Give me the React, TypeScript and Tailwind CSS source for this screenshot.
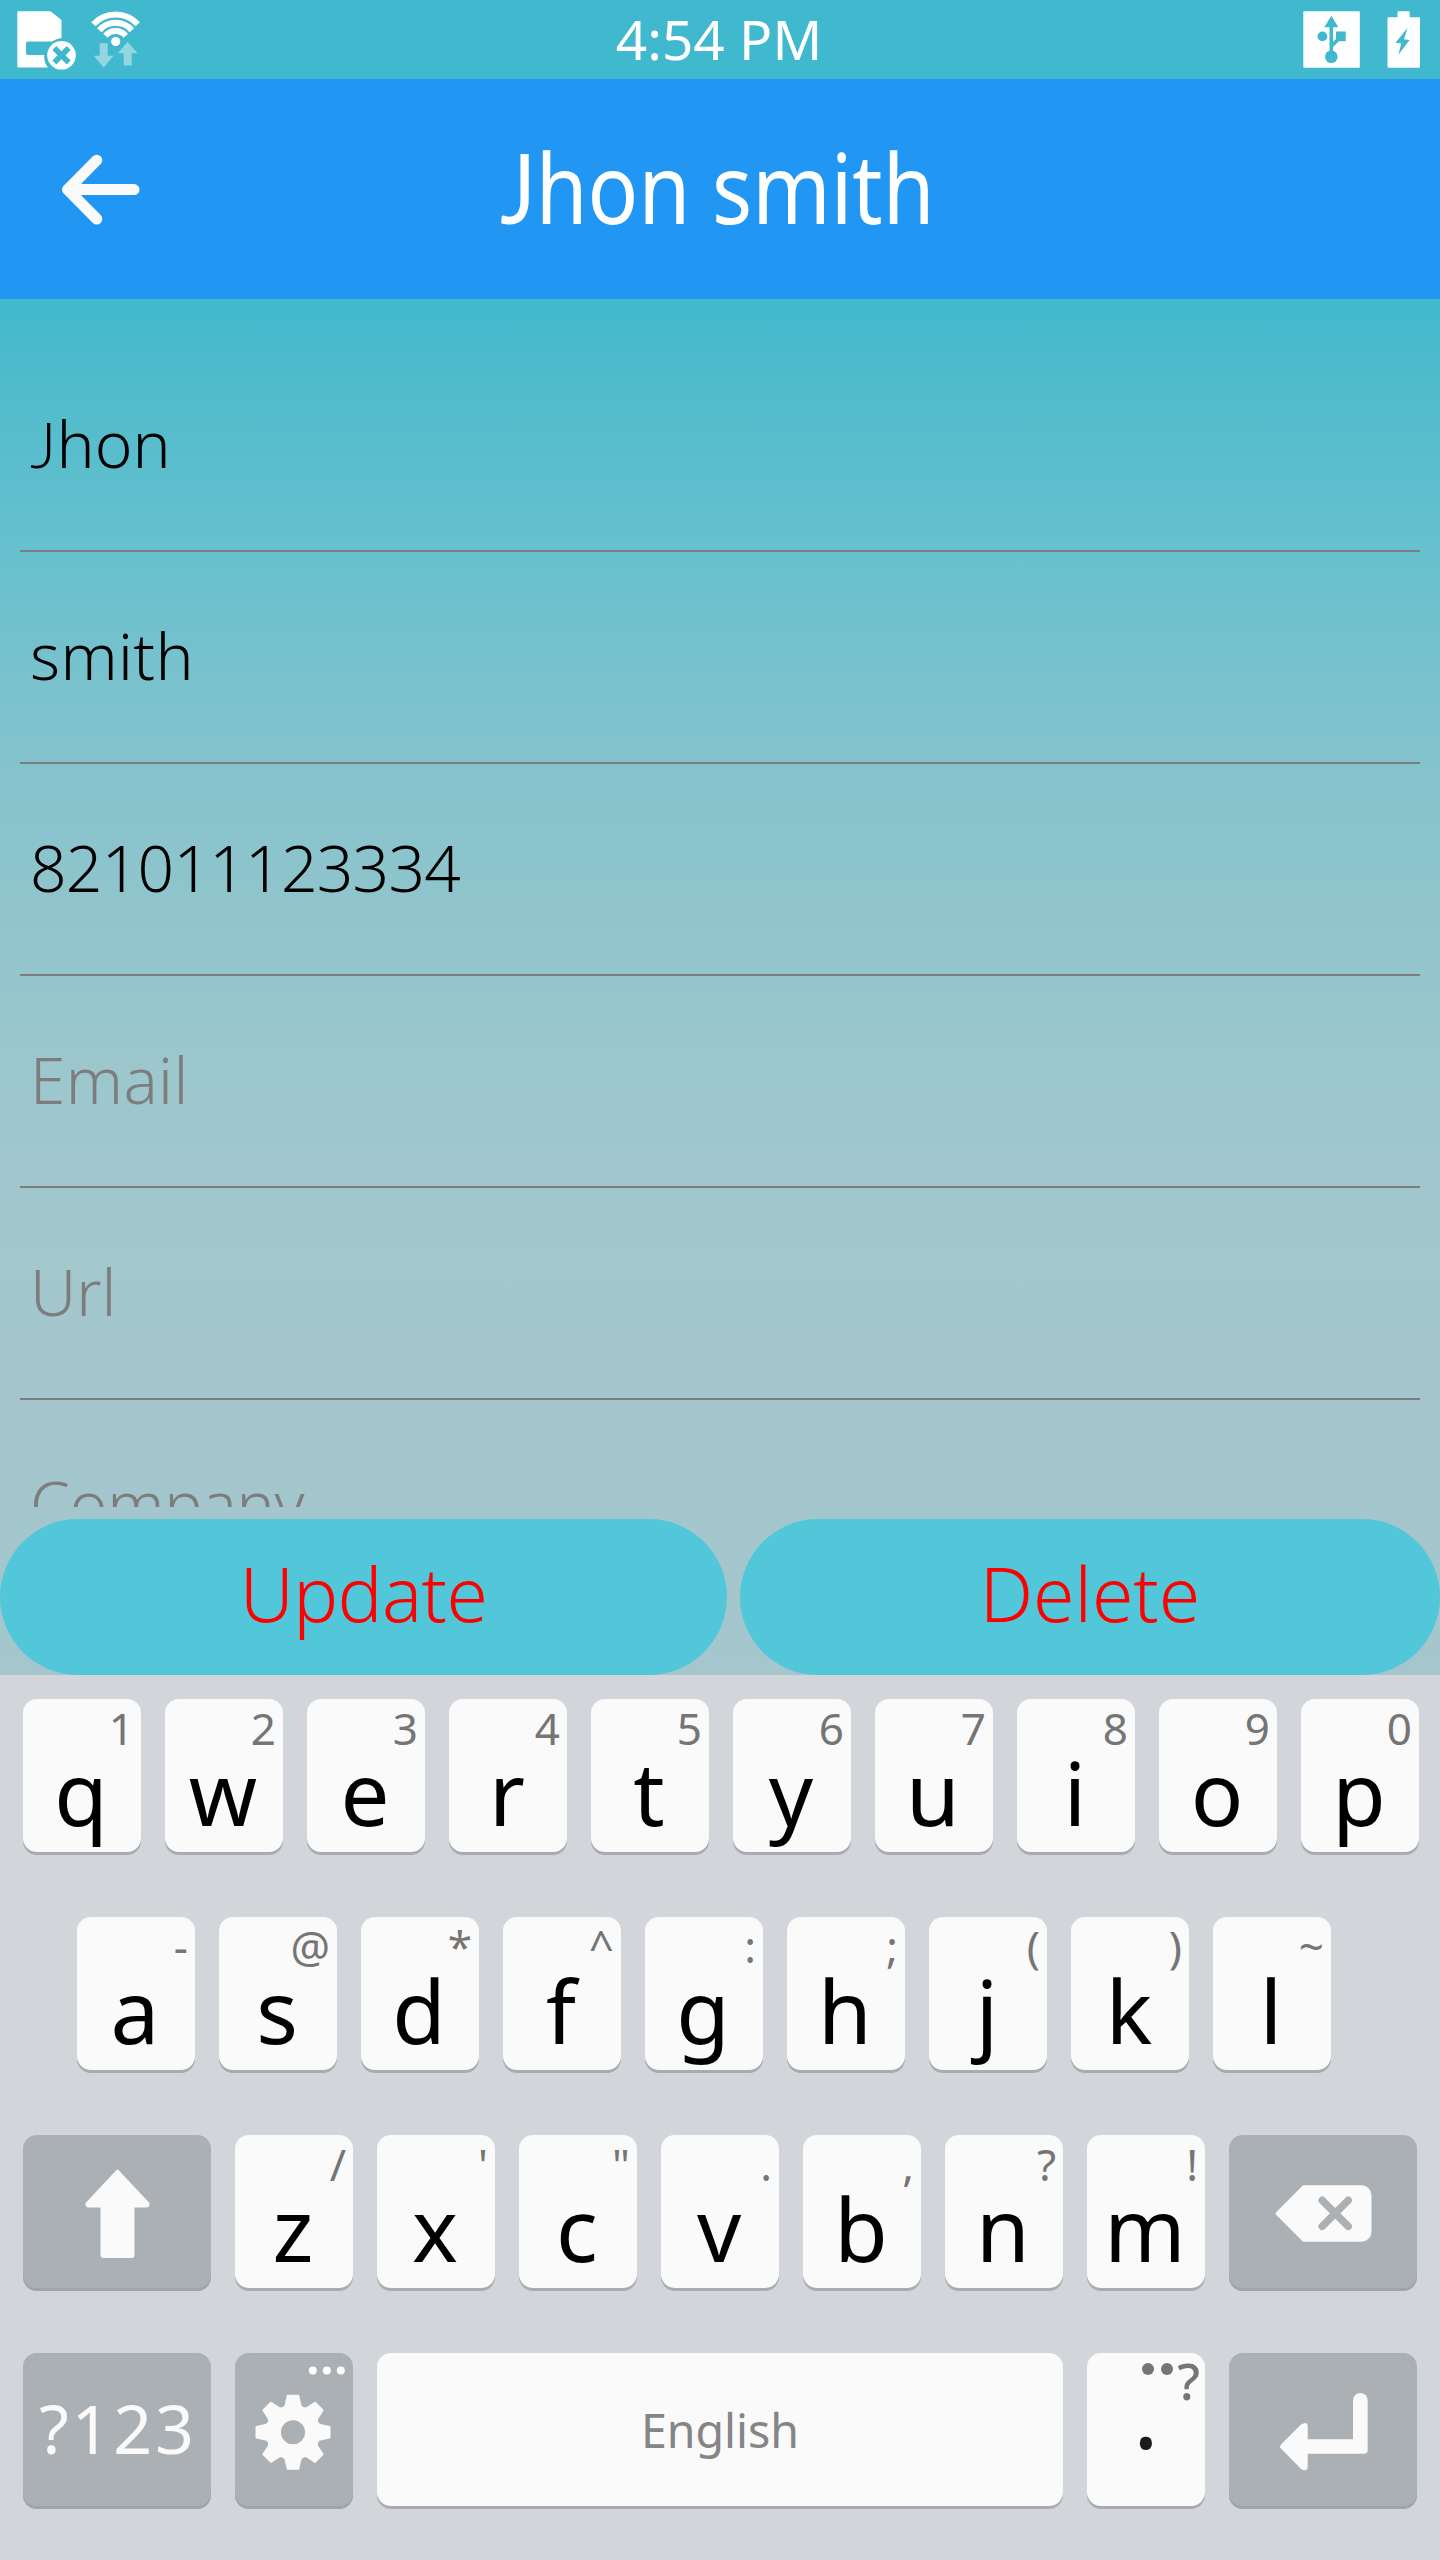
import type { ReactNode } from "react";

type Field = { value?: string; placeholder?: string; tracking: string };

const fields: Field[] = [
  { value: "Jhon", tracking: "tracking-[0px]" },
  { value: "smith", tracking: "tracking-[0.4px]" },
  { value: "821011123334", tracking: "tracking-[-0.7px]" },
  { placeholder: "Email", tracking: "tracking-[0.4px]" },
  { placeholder: "Url", tracking: "tracking-[0px]" },
  { placeholder: "Company", tracking: "tracking-[-0.2px]" },
];

const topRow = ["q1", "w2", "e3", "r4", "t5", "y6", "u7", "i8", "o9", "p0"];
const middleRow = ["a-", "s@", "d*", "f^", "g:", "h;", "j(", "k)", "l~"];
const bottomRow = ["z/", "x'", 'c"', "v.", "b,", "n?", "m!"];

/* The J of this typeface rests on the baseline, unlike the one in Noto Sans. */
function Name({ text }: { text: string }) {
  return text.startsWith("J") ? (
    <>
      <span className="font-['Lato']">J</span>
      {text.slice(1)}
    </>
  ) : (
    <>{text}</>
  );
}

function StatusBar() {
  return (
    <div className="flex h-[79px] items-start justify-between bg-[#40b8ce]">
      <svg className="h-[79px] w-[160px]" viewBox="0 0 160 79">
        <path
          fill="#fff"
          fillRule="evenodd"
          d="M18.3 11.3h32.2l11 8.6v18a17.6 17.6 0 0 0-9.5 3.7H28a2 2 0 0 0-2 2V53a2 2 0 0 0 2 2h16.2a17.6 17.6 0 0 0 3.8 12.6H18.3a1 1 0 0 1-1-1V12.3a1 1 0 0 1 1-1z"
        />
        <circle cx="61.5" cy="55.3" r="14.3" fill="#fff" />
        <path d="M54.3 48.1l14.4 14.4M68.7 48.1L54.3 62.5" stroke="#40b8ce" strokeWidth="5.6" />
        <g fill="none" stroke="#fff" strokeWidth="6">
          <path d="M93.4 24.2a30.5 30.5 0 0 1 44.4 0" />
          <path d="M99.3 30.3a21.5 21.5 0 0 1 32.6 0" />
          <path d="M105.4 35.7a13.6 13.6 0 0 1 20.4 0" />
        </g>
        <circle cx="115.7" cy="41.6" r="4.6" fill="#fff" />
        <path fill="#93d5e1" d="M99.7 43.3h8v12.5h5.8L103.7 67.5 93.7 55.8h6zM127.6 41.7l10.1 11.6h-6V65.6h-8V53.3h-6z" />
      </svg>
      <div className="text-[55px] leading-[77.5px] text-white font-['Noto_Sans',sans-serif]">4:54 PM</div>
      <svg className="h-[79px] w-[162px]" viewBox="1278 0 162 79">
        <rect x="1303.3" y="11.3" width="56.5" height="56.5" rx="1" fill="#fff" />
        <g fill="#40b8ce">
          <path d="M1331.3 15.7l7 11.6h-14z" />
          <circle cx="1322.4" cy="36.4" r="4.9" />
          <rect x="1336" y="31.5" width="9.7" height="9.7" />
          <circle cx="1331.3" cy="56.7" r="6.3" />
        </g>
        <path d="M1331.3 24v30M1332 45.5l7.5-7.5" stroke="#40b8ce" strokeWidth="3.6" fill="none" />
        <path fill="#fff" d="M1397.5 12.3a1 1 0 0 1 1-1h10.2a1 1 0 0 1 1 1v5h9.3a1 1 0 0 1 1 1v48.5a1 1 0 0 1-1 1h-30.5a1 1 0 0 1-1-1V18.3a1 1 0 0 1 1-1h9z" />
        <path fill="#40b8ce" d="M1407.5 28l-12 14.8 5.8.8-3 11.2 11.3-14.8-5.6-.8z" />
      </svg>
    </div>
  );
}

function Header() {
  return (
    <header className="grid h-[220px] grid-cols-[202px_1fr_202px] bg-[#2196f3]">
      <svg className="h-[220px] w-[202px]" viewBox="0 79 202 220" fill="none" stroke="#fafafa" strokeWidth="11" strokeLinecap="round" strokeLinejoin="round">
        <path d="M96.8 160.2L67.6 189.6l29.2 29.4M70 189.6h64" />
        <path d="M68 189.6l8-6v12z" />
      </svg>
      <h1 className="origin-center scale-x-[0.865] whitespace-nowrap pr-[6px] text-center text-[97px] leading-[215px] font-normal text-white">
        <Name text="Jhon smith" />
      </h1>
    </header>
  );
}

function Key({ chars }: { chars: string }) {
  return (
    <div className="flex h-[153px] w-[118px] flex-col rounded-[14px] bg-[#fafafa] pt-[7px] shadow-[0_3px_0_#a8abaf]">
      <span className="pr-[7px] text-right text-[44px] leading-[45px] text-[#757575]">{chars[1]}</span>
      <span className="mt-[-2px] pr-[2px] text-center text-[87px] leading-[87px] font-[450] text-black">{chars[0]}</span>
    </div>
  );
}

function DarkKey({ width, children }: { width: string; children: ReactNode }) {
  return (
    <div className={`${width} h-[156px] shrink-0 overflow-hidden rounded-[14px] bg-[#aab0b4] shadow-[inset_0_-3px_0_#a0a5a9]`}>
      {children}
    </div>
  );
}

function Gear() {
  return (
    <svg className="size-full" viewBox="235 2353 118 156">
      <g fill="#fff">
        <circle cx="312.8" cy="2370.5" r="4" />
        <circle cx="326.8" cy="2370.5" r="4" />
        <circle cx="340.8" cy="2370.5" r="4" />
      </g>
      <g transform="translate(293 2432.3)" fill="#fafafa">
        {[0, 45, 90, 135, 180, 225, 270, 315].map((a) => (
          <path key={a} transform={`rotate(${a})`} d="M-5.3-37.5H5.3q.8 0 1 .8L8.3-27.5Q9.3-24.5 12-25L8-18H-8L-12-25Q-9.3-24.5-8.3-27.5L-6.3-36.7q.2-.8 1-.8z" />
        ))}
        <circle r="19" fill="none" stroke="#fafafa" strokeWidth="14" />
        <circle r="11.5" fill="#aab0b4" />
      </g>
    </svg>
  );
}

function Keyboard() {
  return (
    <div className="flex h-[885px] flex-col gap-[62px] bg-[#d2d5da] pt-[24px] pl-[23px]">
      <div className="flex h-[156px] gap-[24px]">
        {topRow.map((k) => <Key key={k} chars={k} />)}
      </div>
      <div className="flex h-[156px] gap-[24px] pl-[54px]">
        {middleRow.map((k) => <Key key={k} chars={k} />)}
      </div>
      <div className="flex h-[156px] gap-[24px]">
        <DarkKey width="w-[188px]">
          <svg className="size-full" viewBox="23 2135 188 156">
            <path
              d="M117.5 2170.5L86.5 2203.5a2.500 2.500 0 0 0 1.500 3h13.500V2255a2 2 0 0 0 2 2h28a2 2 0 0 0 2-2v-48.500H147a2.500 2.500 0 0 0 1.500-3z"
              fill="#fafafa"
              stroke="#fafafa"
              strokeWidth="2"
              strokeLinejoin="round"
            />
          </svg>
        </DarkKey>
        {bottomRow.map((k) => <Key key={k} chars={k} />)}
        <DarkKey width="w-[188px]">
          <svg className="size-full" viewBox="1229 2135 188 156">
            <path d="M1304 2185.3h57.5a10 10 0 0 1 10 10v36.4a10 10 0 0 1-10 10h-57.5a3 3 0 0 1-2-1l-25.6-25.7a2 2 0 0 1 0-3l25.6-25.7a3 3 0 0 1 2-1z" fill="#fafafa" />
            <path d="M1322.2 2200.3l26 26M1348.2 2200.3l-26 26" stroke="#aab0b4" strokeWidth="7.5" strokeLinecap="round" />
          </svg>
        </DarkKey>
      </div>
      <div className="flex h-[156px] gap-[24px]">
        <DarkKey width="w-[188px]">
          <div className="pl-[2px] text-center text-[68px] leading-[149px] tracking-[2.8px] text-[#fafafa]">?123</div>
        </DarkKey>
        <DarkKey width="w-[118px]">
          <Gear />
        </DarkKey>
        <div className="h-[153px] w-[686px] rounded-[14px] bg-[#fafafa] text-center text-[46.5px] leading-[154px] text-[#858585] shadow-[0_3px_0_#a8abaf]">
          English
        </div>
        <div className="flex h-[153px] w-[118px] flex-col rounded-[14px] bg-[#fafafa] shadow-[0_3px_0_#a8abaf]">
          <div className="flex h-[60px] justify-end pr-[5px] text-[#757575]">
            <span className="mt-[10px] mr-[7.5px] size-[12px] rounded-full bg-[#757575]" />
            <span className="mt-[10px] mr-[4px] size-[12px] rounded-full bg-[#757575]" />
            <span className="text-[51px] leading-[54px] font-medium">?</span>
          </div>
          <span className="-mt-[44px] text-center text-[98px] leading-[84px] text-[#1a1a1a]">.</span>
        </div>
        <DarkKey width="w-[188px]">
          <svg className="size-full" viewBox="1229 2353 188 156">
            <path
              d="M1281 2444.5l20-20q6.700-4 6.700 2v12.800h45.300v-39a7.300 7.300 0 0 1 14.700 0v49.500a4 4 0 0 1-4 4h-56v12.700q0 6-6.700 2.500l-20-20.500a3 3 0 0 1 0-4z"
              fill="#fafafa"
            />
          </svg>
        </DarkKey>
      </div>
    </div>
  );
}

export default function App() {
  return (
    <div className="flex h-[2560px] w-[1440px] flex-col overflow-hidden font-['Noto_Sans',sans-serif]">
      <StatusBar />
      <Header />
      <main className="h-[1376px] bg-[linear-gradient(180deg,#41bacd_0px,#4fbbcc_80px,#67c0ce_250px,#86c3cd_480px,#93c5cc_650px,#9cc7cd_780px,#a2c7cd_950px,#a4c6cc_1376px)]">
        <div className="h-[1208px] overflow-hidden px-[20px] pt-[41px]">
          {fields.map(({ value, placeholder, tracking }) => (
            <div
              key={value ?? placeholder}
              className={`${value ? "text-black" : "text-[#7d7d7d]"} ${tracking} h-[212px] border-b-2 border-[#7d7d7d] pl-[10px] text-[64px] leading-[207px] font-light`}
            >
              <Name text={value ?? placeholder ?? ""} />
            </div>
          ))}
        </div>
        <div className="grid grid-cols-[727px_700px] gap-[13px] pt-[12px] text-[75px] leading-[147px] font-light text-[#ff0000]">
          <button className="h-[156px] rounded-full bg-[#52c7da] pb-[7px] tracking-[-0.6px]">Update</button>
          <button className="h-[156px] rounded-full bg-[#52c7da] pb-[7px]">Delete</button>
        </div>
      </main>
      <Keyboard />
    </div>
  );
}
